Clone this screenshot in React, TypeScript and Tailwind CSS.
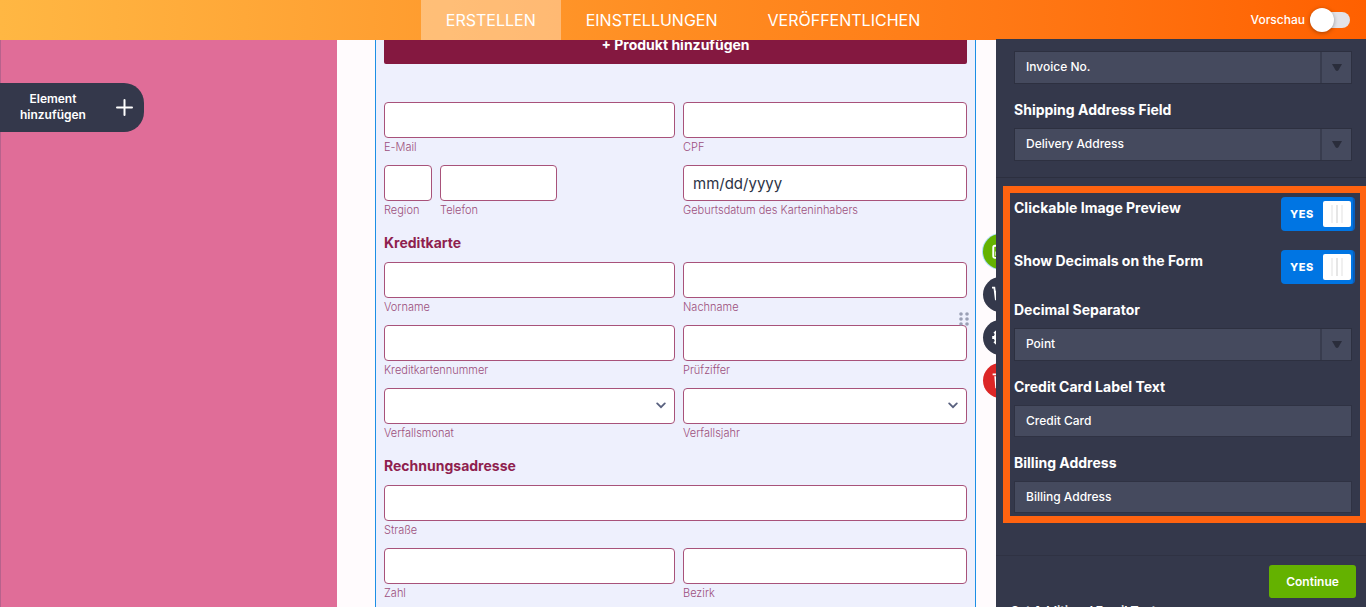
import { useId, type ReactNode } from "react";

function Field({ label, type = "text", placeholder, className = "" }: { label: string; type?: string; placeholder?: string; className?: string }) {
  const id = useId();
  return (
    <div className={`flex flex-col ${className}`}>
      <input
        id={id}
        type={type}
        placeholder={placeholder}
        className="h-9 w-full rounded border border-[#a8527a] bg-white px-[9px] text-[15px] text-[#2c3345] outline-none placeholder:text-[#2c3345]"
      />
      <label htmlFor={id} className="h-[19px] text-[11px] leading-[19px] font-light text-[#9c4f7c]">
        {label}
      </label>
    </div>
  );
}

function SelectField({ label }: { label: string }) {
  const id = useId();
  return (
    <div className="flex flex-col">
      <div className="relative">
        <select id={id} className="h-9 w-full appearance-none rounded border border-[#a8527a] bg-white px-[9px] text-[15px] outline-none">
          <option value=""></option>
        </select>
        <svg viewBox="0 0 10 7" className="pointer-events-none absolute top-[14px] right-[9px] h-[7px] w-[10px]" fill="none" stroke="#59617f" strokeWidth="1.8" strokeLinecap="round">
          <path d="M1.2 1.4 L5 5.2 L8.8 1.4" />
        </svg>
      </div>
      <label htmlFor={id} className="h-[19px] text-[11px] leading-[19px] font-light text-[#9c4f7c]">
        {label}
      </label>
    </div>
  );
}

function Row({ children }: { children: ReactNode }) {
  return <div className="grid grid-cols-[291fr_284fr] gap-2">{children}</div>;
}

function Heading({ children }: { children: ReactNode }) {
  return <h2 className="pt-[6px] pb-[2px] text-[14px] leading-[18px] font-bold text-[#8f1f4f]">{children}</h2>;
}

const panelLabel = "text-[14px] leading-5 font-bold text-white";

function PanelSelect({ label, hideLabel, value }: { label: string; hideLabel?: boolean; value: string }) {
  const id = useId();
  return (
    <div className="flex flex-col gap-2">
      {!hideLabel && (
        <label htmlFor={id} className={panelLabel}>
          {label}
        </label>
      )}
      <div className="relative">
        <select
          id={id}
          aria-label={hideLabel ? label : undefined}
          className="block h-[33px] w-full appearance-none border border-[#2d3040] bg-[#454a5e] px-[11px] pb-px text-[12px] font-medium text-white outline-none"
        >
          <option>{value}</option>
        </select>
        <span className="pointer-events-none absolute inset-y-px right-px flex w-[31px] items-center justify-center border-l-2 border-[#383c4e]">
          <svg viewBox="0 0 10 7" className="h-[7px] w-[10px]" fill="#2a2d3b">
            <path d="M0 0h10L6.4 6.2Q5 7.6 3.6 6.2z" />
          </svg>
        </span>
      </div>
    </div>
  );
}

function PanelInput({ label, value }: { label: string; value: string }) {
  const id = useId();
  return (
    <div className="flex flex-col gap-2">
      <label htmlFor={id} className={panelLabel}>
        {label}
      </label>
      <input id={id} defaultValue={value} className="h-8 w-full border border-[#2f3243] bg-[#454a5e] px-[11px] pb-px text-[12px] font-medium text-white outline-none" />
    </div>
  );
}

function PanelToggle({ label }: { label: string }) {
  return (
    <div className="flex items-start justify-between">
      <span className={`${panelLabel} pt-px`}>{label}</span>
      <button
        type="button"
        role="switch"
        aria-checked="true"
        aria-label={label}
        className="-mr-[3px] flex h-[34px] w-[74px] items-center justify-between rounded border-r-2 border-[#0a5cb8] bg-[#0075e3] pr-[2px] pl-[9px]"
      >
        <span className="text-[11px] font-extrabold tracking-wider text-white">YES</span>
        <span className="flex h-[26px] w-7 items-center justify-center gap-[3px] rounded-[2px] bg-white">
          <span className="h-[18px] w-[2px] bg-[#f0f0f0]" />
          <span className="h-[18px] w-[2px] bg-[#e6e6e6]" />
          <span className="h-[18px] w-[2px] bg-[#f0f0f0]" />
        </span>
      </button>
    </div>
  );
}

function RoundAction({ label, className, children }: { label: string; className: string; children: ReactNode }) {
  return (
    <button type="button" aria-label={label} className={`flex size-[35px] items-center justify-center rounded-full text-white ${className}`}>
      <svg viewBox="0 0 16 16" className="size-[17px]" fill="none" stroke="currentColor">
        {children}
      </svg>
    </button>
  );
}

export default function App() {
  return (
    <div className="flex h-screen flex-col overflow-hidden bg-[#34384b] font-['Inter',sans-serif]">
      <header className="relative z-20 grid h-10 shrink-0 grid-cols-[1fr_auto_1fr] bg-linear-to-r from-[#ffb743] via-[#ff8c21] to-[#ff6000]">
        <nav className="col-start-2 flex text-[16px] text-white">
          <a href="#build" className="flex items-center bg-white/35 px-[25px]">ERSTELLEN</a>
          <a href="#settings" className="flex items-center px-[25px]">EINSTELLUNGEN</a>
          <a href="#publish" className="flex items-center px-[25px]">VERÖFFENTLICHEN</a>
        </nav>
        <div className="flex items-center justify-end gap-[5px] pr-4">
          <span className="text-[12px] font-medium text-white">Vorschau</span>
          <button type="button" role="switch" aria-checked="false" aria-label="Vorschau" className="relative h-4 w-10 rounded-full bg-[#e3e3e8]">
            <span className="absolute -top-1 left-0 size-6 rounded-full bg-white shadow-[0_1px_4px_rgba(0,0,0,0.35)]" />
          </button>
        </div>
      </header>

      <div className="flex min-h-0 flex-1">
        <aside className="flex min-w-0 flex-1 flex-col items-start border-l border-[#b8628c] bg-[#e06d98] pt-[43px]">
          <button type="button" className="-ml-px flex h-[49px] w-36 shrink-0 items-center justify-between rounded-r-[20px] bg-[#34384b] pr-[11px] pl-5 text-white">
            <span className="pb-[2px] text-center text-[12px] leading-4 font-semibold">
              Element
              <br />
              hinzufügen
            </span>
            <svg viewBox="0 0 17 17" className="size-[17px]" stroke="currentColor" strokeWidth="2" strokeLinecap="round">
              <path d="M8.5 1v15M1 8.5h15" />
            </svg>
          </button>
        </aside>

        <main className="relative w-[659px] shrink-0 bg-[#fffbfd] pr-5 pl-[38px]">
          <form className="relative flex h-full flex-col gap-2 overflow-hidden border-x border-[#1c8fe5] bg-[#eef0fd] px-2">
            <button type="button" className="-mt-[14px] mb-[30px] h-[38px] shrink-0 rounded-[2px] bg-[#841840] pb-px text-[14px] font-bold text-white">
              + Produkt hinzufügen
            </button>
            <Row>
              <Field label="E-Mail" />
              <Field label="CPF" />
            </Row>
            <Row>
              <div className="flex gap-2">
                <Field label="Region" className="w-12" />
                <Field label="Telefon" className="w-[117px]" />
              </div>
              <Field label="Geburtsdatum des Karteninhabers" placeholder="mm/dd/yyyy" />
            </Row>
            <Heading>Kreditkarte</Heading>
            <Row>
              <Field label="Vorname" />
              <Field label="Nachname" />
            </Row>
            <Row>
              <Field label="Kreditkartennummer" />
              <Field label="Prüfziffer" />
            </Row>
            <Row>
              <SelectField label="Verfallsmonat" />
              <SelectField label="Verfallsjahr" />
            </Row>
            <Heading>Rechnungsadresse</Heading>
            <Field label="Straße" />
            <Row>
              <Field label="Zahl" />
              <Field label="Bezirk" />
            </Row>
            <svg viewBox="0 0 10 14" className="absolute top-[272px] right-[6px] h-[14px] w-[10px]" fill="#9a9fb5">
              <circle cx="2" cy="2" r="1.8" />
              <circle cx="8" cy="2" r="1.8" />
              <circle cx="2" cy="7" r="1.8" />
              <circle cx="8" cy="7" r="1.8" />
              <circle cx="2" cy="12" r="1.8" />
              <circle cx="8" cy="12" r="1.8" />
            </svg>
          </form>
          <div className="absolute top-[194px] left-[646px] flex flex-col gap-2">
            <RoundAction label="Formular" className="bg-[#64b200] ring-1 ring-[#a9dcf5]">
              <rect x="1.2" y="2.6" width="13.6" height="11.4" rx="1.5" strokeWidth="1.8" />
              <path d="M3.2 8h9.6v4H3.2z" fill="currentColor" stroke="none" />
            </RoundAction>
            <RoundAction label="Produkte" className="bg-[#34384b]">
              <path d="M0 1.6h2.2l1.4 11h9.6l1.5-7.2H3" strokeWidth="1.7" />
              <path d="M4.6 13.4h2v2h-2zM11 13.4h2v2h-2z" fill="currentColor" stroke="none" />
            </RoundAction>
            <RoundAction label="Eigenschaften" className="bg-[#34384b]">
              <circle cx="8" cy="8" r="4.6" strokeWidth="3.4" />
              <path d="M8 0.2v3M8 12.8v3M0.2 8h3M12.8 8h3M2.4 2.4l2 2M11.6 11.6l2 2M2.4 13.6l2-2M11.6 4.4l2-2" strokeWidth="3" />
            </RoundAction>
            <RoundAction label="Löschen" className="bg-[#dc2626]">
              <path d="M0.6 2.2h14.8M5.6 1.6V0.6h4.8v1" strokeWidth="1.6" />
              <path d="M2.2 4h11.6l-.9 11.4H3.1z" fill="currentColor" stroke="none" />
            </RoundAction>
          </div>
        </main>

        <section aria-label="Properties" className="relative z-30 -mt-px w-[370px] shrink-0 overflow-hidden bg-[#34384b] pt-px">
          <div className="flex flex-col gap-4 border-b border-[#2c2f3f] pt-[11px] pr-[14px] pb-4 pl-[18px]">
            <PanelSelect label="Invoice No." hideLabel value="Invoice No." />
            <PanelSelect label="Shipping Address Field" value="Delivery Address" />
          </div>
          <div className="flex flex-col gap-4 pt-[19px] pr-[14px] pb-[42px] pl-[18px]">
            <div className="flex flex-col gap-[19px]">
              <PanelToggle label="Clickable Image Preview" />
              <PanelToggle label="Show Decimals on the Form" />
            </div>
            <PanelSelect label="Decimal Separator" value="Point" />
            <PanelInput label="Credit Card Label Text" value="Credit Card" />
            <PanelInput label="Billing Address" value="Billing Address" />
          </div>
          <div className="flex justify-end border-t border-[#2f3243] px-[10px] pt-[9px] pb-[7px]">
            <button type="button" className="h-[33px] w-[87px] rounded-[3px] bg-[#64b200] text-[12px] font-semibold text-white">
              Continue
            </button>
          </div>
          <p className="pl-[15px] text-[12px] leading-3 font-bold text-white">Set Additional Email Text</p>
          <div className="pointer-events-none absolute top-[147px] -right-px left-[7px] h-[337px] border-7 border-[#ff6310]" />
        </section>
      </div>
    </div>
  );
}
